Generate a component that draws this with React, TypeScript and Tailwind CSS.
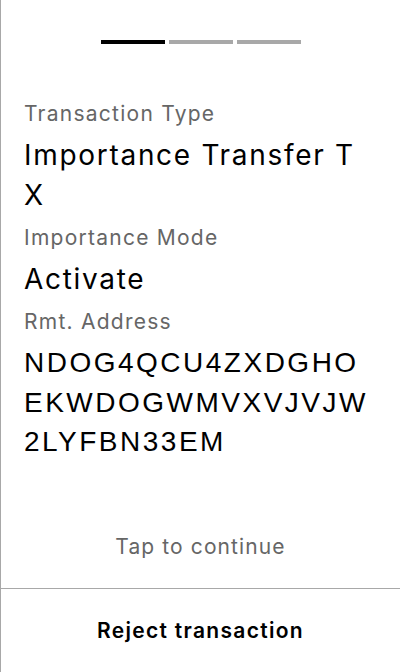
import React from "react";

const fields = [
  { label: "Transaction Type", value: "Importance Transfer TX", address: false },
  { label: "Importance Mode", value: "Activate", address: false },
  { label: "Rmt. Address", value: "NDOG4QCU4ZXDGHOEKWDOGWMVXVJVJW2LYFBN33EM", address: true },
];

export default function App() {
  return (
    <div className="flex h-[672px] w-[400px] flex-col border-l border-[#a8a8a8] bg-white font-['Inter',sans-serif]">
      <div className="mt-10 flex justify-center gap-1">
        <div className="h-1 w-16 bg-black" />
        <div className="h-1 w-16 bg-[#a8a8a8]" />
        <div className="h-1 w-16 bg-[#a8a8a8]" />
      </div>

      <div className="mt-[56px] flex flex-col gap-[9px] pl-[23px] pr-8">
        {fields.map((f) => (
          <div key={f.label} className="flex flex-col">
            <div className="text-[21px] leading-[28px] tracking-[1.25px] text-[#666]">{f.label}</div>
            {f.address ? (
              <div className="mt-[7px] break-all font-['Liberation_Sans',Arial,sans-serif] text-[28px] leading-[39.5px] tracking-[2.5px] text-black">
                {f.value}
              </div>
            ) : (
              <div className="mt-[7px] break-all text-[28px] leading-[40px] tracking-[1.7px] text-black">{f.value}</div>
            )}
          </div>
        ))}
      </div>

      <div className="flex-1" />

      <button className="pb-[27px] text-center text-[21px] leading-[28px] tracking-[1.1px] text-[#666]">Tap to continue</button>

      <div className="border-t border-[#a8a8a8]">
        <button className="h-[83px] w-full text-center text-[21px] font-semibold tracking-[1.3px] text-black">
          Reject transaction
        </button>
      </div>
    </div>
  );
}
